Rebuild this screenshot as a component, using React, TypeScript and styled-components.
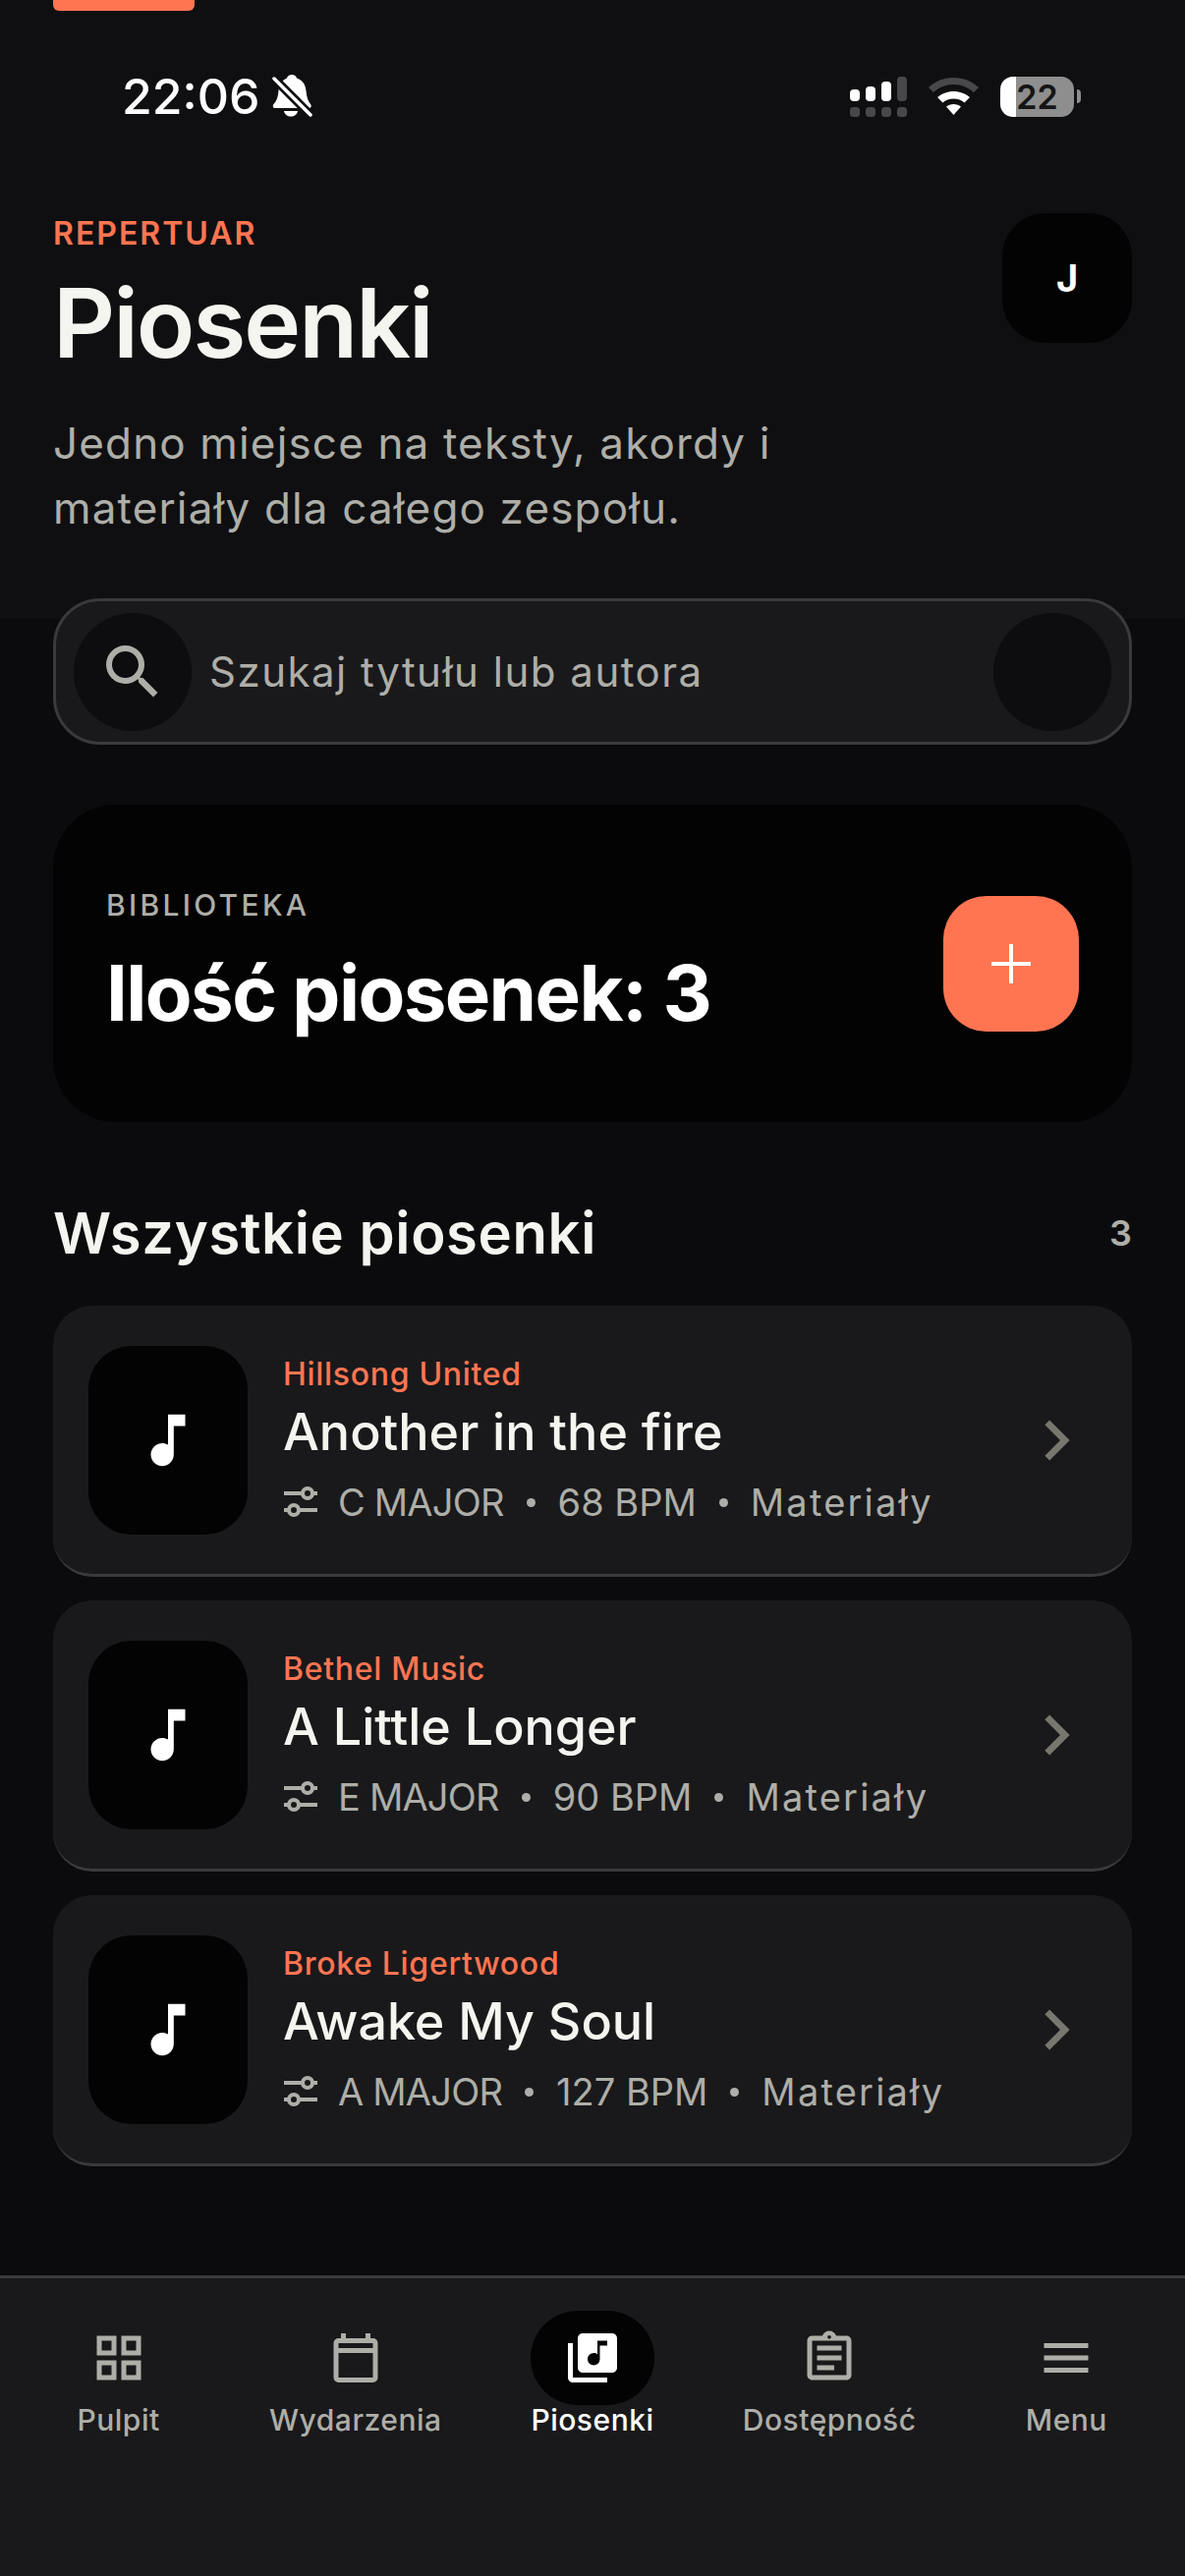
import React from 'react'
import styled, { createGlobalStyle } from 'styled-components'
import {
  MdChevronRight,
  MdGridView,
  MdLibraryMusic,
  MdMenu,
  MdMusicNote,
  MdOutlineAssignment,
  MdSearch,
} from 'react-icons/md'

const GlobalStyle = createGlobalStyle`
  html, body {
    margin: 0;
    padding: 0;
    background: #0b0b0d;
  }
  * {
    box-sizing: border-box;
  }
`

const Shell = styled.div`
  position: relative;
  display: flex;
  flex-direction: column;
  width: 1206px;
  height: 2622px;
  overflow: hidden;
  background: #0b0b0d;
  color: #f5f5f0;
  font-family: Inter, 'Noto Sans', sans-serif;

  &::before {
    content: '';
    position: absolute;
    top: 0;
    left: 0;
    right: 0;
    height: 630px;
    background: #0f0f11;
  }
`
const Content = styled.main`
  position: relative;
  flex: 1;
  display: flex;
  flex-direction: column;
`
const TopAccent = styled.div`
  width: 144px;
  height: 11px;
  margin-left: 54px;
  background: #ff7552;
  border-radius: 0 0 6px 6px;
`
const StatusBar = styled.div`
  display: flex;
  align-items: center;
  justify-content: space-between;
  height: 42px;
  margin-top: 66px;
  padding: 0 106px 0 124px;
`
const StatusLeft = styled.div`
  display: flex;
  align-items: center;
  gap: 12px;
`
const Time = styled.span`
  font-size: 50px;
  font-weight: 500;
  line-height: 42px;
  color: #fff;
`
const StatusRight = styled.div`
  display: flex;
  align-items: center;
  gap: 22px;
`
const Battery = styled.div`
  width: 75px;
  height: 41px;
  border-radius: 13px;
  background: linear-gradient(90deg, #fff 0 16px, #8e8e8e 16px);
  color: #151515;
  font-size: 34px;
  font-weight: 600;
  line-height: 41px;
  text-align: center;
`
const BatteryWrap = styled.div`
  display: flex;
  align-items: center;
  gap: 3px;
`
const BatteryNub = styled.div`
  width: 4px;
  height: 14px;
  border-radius: 0 4px 4px 0;
  background: #8e8e8e;
`
const Header = styled.header`
  display: flex;
  justify-content: space-between;
  align-items: flex-start;
  margin-top: 98px;
  padding: 0 54px;
`
const HeaderText = styled.div`
  display: flex;
  flex-direction: column;
  padding-top: 6px;
`
const Eyebrow = styled.div`
  font-size: 32px;
  font-weight: 600;
  line-height: 30px;
  letter-spacing: 2px;
  color: #ff7552;
`
const Title = styled.h1`
  margin: 21px 0 0;
  font-size: 98px;
  font-weight: 600;
  line-height: 110px;
  letter-spacing: -2px;
  color: #f5f5f0;
`
const Subtitle = styled.p`
  margin: 34px 0 0;
  width: 800px;
  font-size: 44px;
  font-weight: 400;
  line-height: 66px;
  letter-spacing: 1.15px;
  color: #aeaea8;
`
const Avatar = styled.div`
  display: flex;
  align-items: center;
  justify-content: center;
  width: 132px;
  height: 132px;
  border-radius: 44px;
  background: #030303;
  color: #fff;
  font-size: 38px;
  font-weight: 700;
`
const SearchBar = styled.div`
  display: flex;
  align-items: center;
  justify-content: space-between;
  height: 149px;
  margin: 59px 54px 0;
  padding: 0 18px;
  background: #19191b;
  border: 3px solid #3a3a3c;
  border-radius: 48px;
`
const SearchCircle = styled.div`
  display: flex;
  align-items: center;
  justify-content: center;
  flex: none;
  width: 120px;
  height: 120px;
  border-radius: 50%;
  background: #0d0d0f;
  color: #aeaea8;
`
const SearchText = styled.span`
  flex: 1;
  margin-left: 18px;
  font-size: 42px;
  line-height: 50px;
  letter-spacing: 1.5px;
  color: #aeaea8;
`
const LibraryCard = styled.section`
  display: flex;
  align-items: center;
  justify-content: space-between;
  height: 323px;
  margin: 61px 54px 0;
  padding: 0 54px;
  background: #030303;
  border-radius: 64px;
`
const LibraryText = styled.div`
  display: flex;
  flex-direction: column;
  padding-bottom: 2px;
`
const LibraryLabel = styled.div`
  font-size: 30px;
  font-weight: 500;
  line-height: 34px;
  letter-spacing: 3.3px;
  color: #aeaea8;
`
const LibraryCount = styled.div`
  margin-top: 28px;
  font-size: 78px;
  font-weight: 700;
  line-height: 90px;
  letter-spacing: -1.6px;
  color: #fff;
`
const AddButton = styled.button`
  display: flex;
  align-items: center;
  justify-content: center;
  width: 138px;
  height: 138px;
  padding: 0;
  border: 0;
  border-radius: 44px;
  background: #ff7552;
  color: #fff;
`
const SectionHead = styled.div`
  display: flex;
  align-items: center;
  justify-content: space-between;
  height: 70px;
  margin: 78px 54px 0;
`
const SectionTitle = styled.h2`
  margin: 0;
  font-size: 58px;
  font-weight: 600;
  line-height: 70px;
  letter-spacing: 0.6px;
  color: #f5f5f0;
`
const SectionCount = styled.span`
  font-size: 36px;
  font-weight: 600;
  color: #aeaea8;
`
const SongList = styled.div`
  display: flex;
  flex-direction: column;
  gap: 24px;
  margin: 39px 54px 0;
`
const SongCard = styled.article`
  display: flex;
  align-items: center;
  height: 276px;
  padding: 0 36px;
  background: #19191b;
  border-bottom: 3px solid #3a3a3c;
  border-radius: 40px;
`
const Thumb = styled.div`
  display: flex;
  align-items: center;
  justify-content: center;
  flex: none;
  width: 162px;
  height: 192px;
  border-radius: 44px;
  background: #030303;
  color: #fff;
`
const SongInfo = styled.div`
  flex: 1;
  display: flex;
  flex-direction: column;
  margin-left: 36px;
`
const Artist = styled.div`
  font-size: 32px;
  font-weight: 500;
  line-height: 40px;
  letter-spacing: 0.7px;
  color: #ff7552;
`
const SongTitle = styled.div`
  margin-top: 7px;
  font-size: 52px;
  font-weight: 500;
  line-height: 64px;
  color: #f5f5f0;
`
const Meta = styled.div`
  display: flex;
  align-items: center;
  gap: 23px;
  margin-top: 16px;
  font-size: 38px;
  line-height: 46px;
  color: #aeaea8;
`
const MetaKey = styled.span`
  display: flex;
  align-items: center;
  gap: 20px;
  letter-spacing: -0.8px;
`
const MetaLink = styled.span`
  letter-spacing: 2.2px;
`
const Dot = styled.i`
  width: 9px;
  height: 9px;
  border-radius: 50%;
  background: #aeaea8;
`
const Chevron = styled.div`
  display: flex;
  flex: none;
  color: #77776f;
`
const BottomNav = styled.nav`
  position: relative;
  display: grid;
  grid-template-columns: repeat(5, 241.2px);
  align-items: start;
  height: 306px;
  padding-top: 33px;
  background: #19191b;
  border-top: 3px solid #3a3a3c;
`
const NavItem = styled.div<{ $active?: boolean }>`
  display: flex;
  flex-direction: column;
  align-items: center;
  color: ${(p) => (p.$active ? '#fff' : '#aeaea8')};
`
const NavIcon = styled.div<{ $active?: boolean }>`
  display: flex;
  align-items: center;
  justify-content: center;
  width: 126px;
  height: 96px;
  border-radius: 48px;
  background: ${(p) => (p.$active ? '#030303' : 'transparent')};
`
const NavLabel = styled.span`
  margin-top: -4px;
  font-size: 30px;
  font-weight: 500;
  line-height: 38px;
  letter-spacing: 0.5px;
`

const BellSlash = () => (
  <svg width="42" height="44" viewBox="0 0 42 44" fill="#fff">
    <path d="M20 0c2.500 0 4.500 1.500 5 3.500 6 2 9 7 9.500 13 .5 6 2 10.500 4.500 13.500 1.500 2 .5 4-1.500 4H3c-2 0-3-2-1.500-4 3-3 4.500-7.500 5-13.500.5-6 3.500-11 8.500-13 .5-2 2.500-3.500 5-3.500z" />
    <path d="M12 37h14c-.5 3.500-3.500 5.500-7 5.500s-6.500-2-7-5.500z" />
    <path d="M1 3l39 39" stroke="#0f0f11" strokeWidth="9" />
    <path d="M2 4l37 37" stroke="#fff" strokeWidth="3.500" strokeLinecap="round" />
  </svg>
)

const Signal = () => (
  <svg width="58" height="41" viewBox="0 0 58 41">
    <rect x="0" y="13" width="10" height="12" rx="4" fill="#fff" />
    <rect x="16" y="10" width="10" height="15" rx="4" fill="#fff" />
    <rect x="32" y="5" width="10" height="20" rx="4" fill="#fff" />
    <rect x="48" y="0" width="10" height="25" rx="4" fill="#48484a" />
    {[0, 16, 32, 48].map((x) => (
      <rect key={x} x={x} y="31" width="10" height="10" rx="3.500" fill="#48484a" />
    ))}
  </svg>
)

const Wifi = () => (
  <svg width="51" height="38" viewBox="0 0 51 38">
    <path d="M25.500 0c10 0 18.500 3.500 25.500 10l-5 5c-5.500-5-12.500-8-20.500-8S10.500 10 5 15l-5-5C7 3.500 15.500 0 25.500 0z" fill="#48484a" />
    <path d="M25.500 14c6.500 0 12 2.500 16.500 6l-5.500 5.500c-3-2.500-6.500-4-11-4s-8 1.500-11 4L9 20c4.500-3.500 10-6 16.500-6z" fill="#fff" />
    <path d="M25.500 27c3 0 5.500 1 7.500 2.500L25.500 38 18 29.500c2-1.500 4.500-2.500 7.500-2.500z" fill="#fff" />
  </svg>
)

const KeyIcon = () => (
  <svg width="36" height="32" viewBox="0 0 36 32" fill="none" stroke="#aeaea8" strokeWidth="4">
    <path d="M1 7h19" />
    <circle cx="25" cy="7" r="5" />
    <path d="M30 7h5" />
    <circle cx="11" cy="24" r="5" />
    <path d="M1 24h5M16 24h19" />
  </svg>
)

const PlusIcon = () => (
  <svg width="40" height="40" viewBox="0 0 40 40" fill="#fff">
    <rect x="18" y="0" width="4" height="40" />
    <rect x="0" y="18" width="40" height="4" />
  </svg>
)

const CalendarIcon = () => (
  <svg width="60" height="60" viewBox="0 0 24 24" fill="currentColor" fillRule="evenodd">
    <path d="M5 22q-.825 0-1.412-.587Q3 20.825 3 20V6q0-.825.588-1.412Q4.175 4 5 4h1V2h2v2h8V2h2v2h1q.825 0 1.413.588Q21 5.175 21 6v14q0 .825-.587 1.413Q19.825 22 19 22H5zm0-2h14V10H5v10zM5 8h14V6H5v2z" />
  </svg>
)

const songs = [
  { artist: 'Hillsong United', title: 'Another in the fire', key: 'C MAJOR', bpm: '68 BPM' },
  { artist: 'Bethel Music', title: 'A Little Longer', key: 'E MAJOR', bpm: '90 BPM' },
  { artist: 'Broke Ligertwood', title: 'Awake My Soul', key: 'A MAJOR', bpm: '127 BPM' },
]

const navItems = [
  { label: 'Pulpit', icon: <MdGridView size={60} /> },
  { label: 'Wydarzenia', icon: <CalendarIcon /> },
  { label: 'Piosenki', icon: <MdLibraryMusic size={60} />, active: true },
  { label: 'Dostępność', icon: <MdOutlineAssignment size={60} /> },
  { label: 'Menu', icon: <MdMenu size={60} /> },
]

export default function App() {
  return (
    <Shell>
      <GlobalStyle />
      <Content>
        <TopAccent />
        <StatusBar>
          <StatusLeft>
            <Time>22:06</Time>
            <BellSlash />
          </StatusLeft>
          <StatusRight>
            <Signal />
            <Wifi />
            <BatteryWrap>
              <Battery>22</Battery>
              <BatteryNub />
            </BatteryWrap>
          </StatusRight>
        </StatusBar>
        <Header>
          <HeaderText>
            <Eyebrow>REPERTUAR</Eyebrow>
            <Title>Piosenki</Title>
            <Subtitle>Jedno miejsce na teksty, akordy i materiały dla całego zespołu.</Subtitle>
          </HeaderText>
          <Avatar>J</Avatar>
        </Header>
        <SearchBar>
          <SearchCircle>
            <MdSearch size={72} />
          </SearchCircle>
          <SearchText>Szukaj tytułu lub autora</SearchText>
          <SearchCircle />
        </SearchBar>
        <LibraryCard>
          <LibraryText>
            <LibraryLabel>BIBLIOTEKA</LibraryLabel>
            <LibraryCount>Ilość piosenek: 3</LibraryCount>
          </LibraryText>
          <AddButton aria-label="Dodaj">
            <PlusIcon />
          </AddButton>
        </LibraryCard>
        <SectionHead>
          <SectionTitle>Wszystkie piosenki</SectionTitle>
          <SectionCount>3</SectionCount>
        </SectionHead>
        <SongList>
          {songs.map((song) => (
            <SongCard key={song.title}>
              <Thumb>
                <MdMusicNote size={70} />
              </Thumb>
              <SongInfo>
                <Artist>{song.artist}</Artist>
                <SongTitle>{song.title}</SongTitle>
                <Meta>
                  <MetaKey>
                    <KeyIcon />
                    {song.key}
                  </MetaKey>
                  <Dot />
                  <span>{song.bpm}</span>
                  <Dot />
                  <MetaLink>Materiały</MetaLink>
                </Meta>
              </SongInfo>
              <Chevron>
                <MdChevronRight size={82} />
              </Chevron>
            </SongCard>
          ))}
        </SongList>
      </Content>
      <BottomNav>
        {navItems.map((item) => (
          <NavItem key={item.label} $active={item.active}>
            <NavIcon $active={item.active}>{item.icon}</NavIcon>
            <NavLabel>{item.label}</NavLabel>
          </NavItem>
        ))}
      </BottomNav>
    </Shell>
  )
}
